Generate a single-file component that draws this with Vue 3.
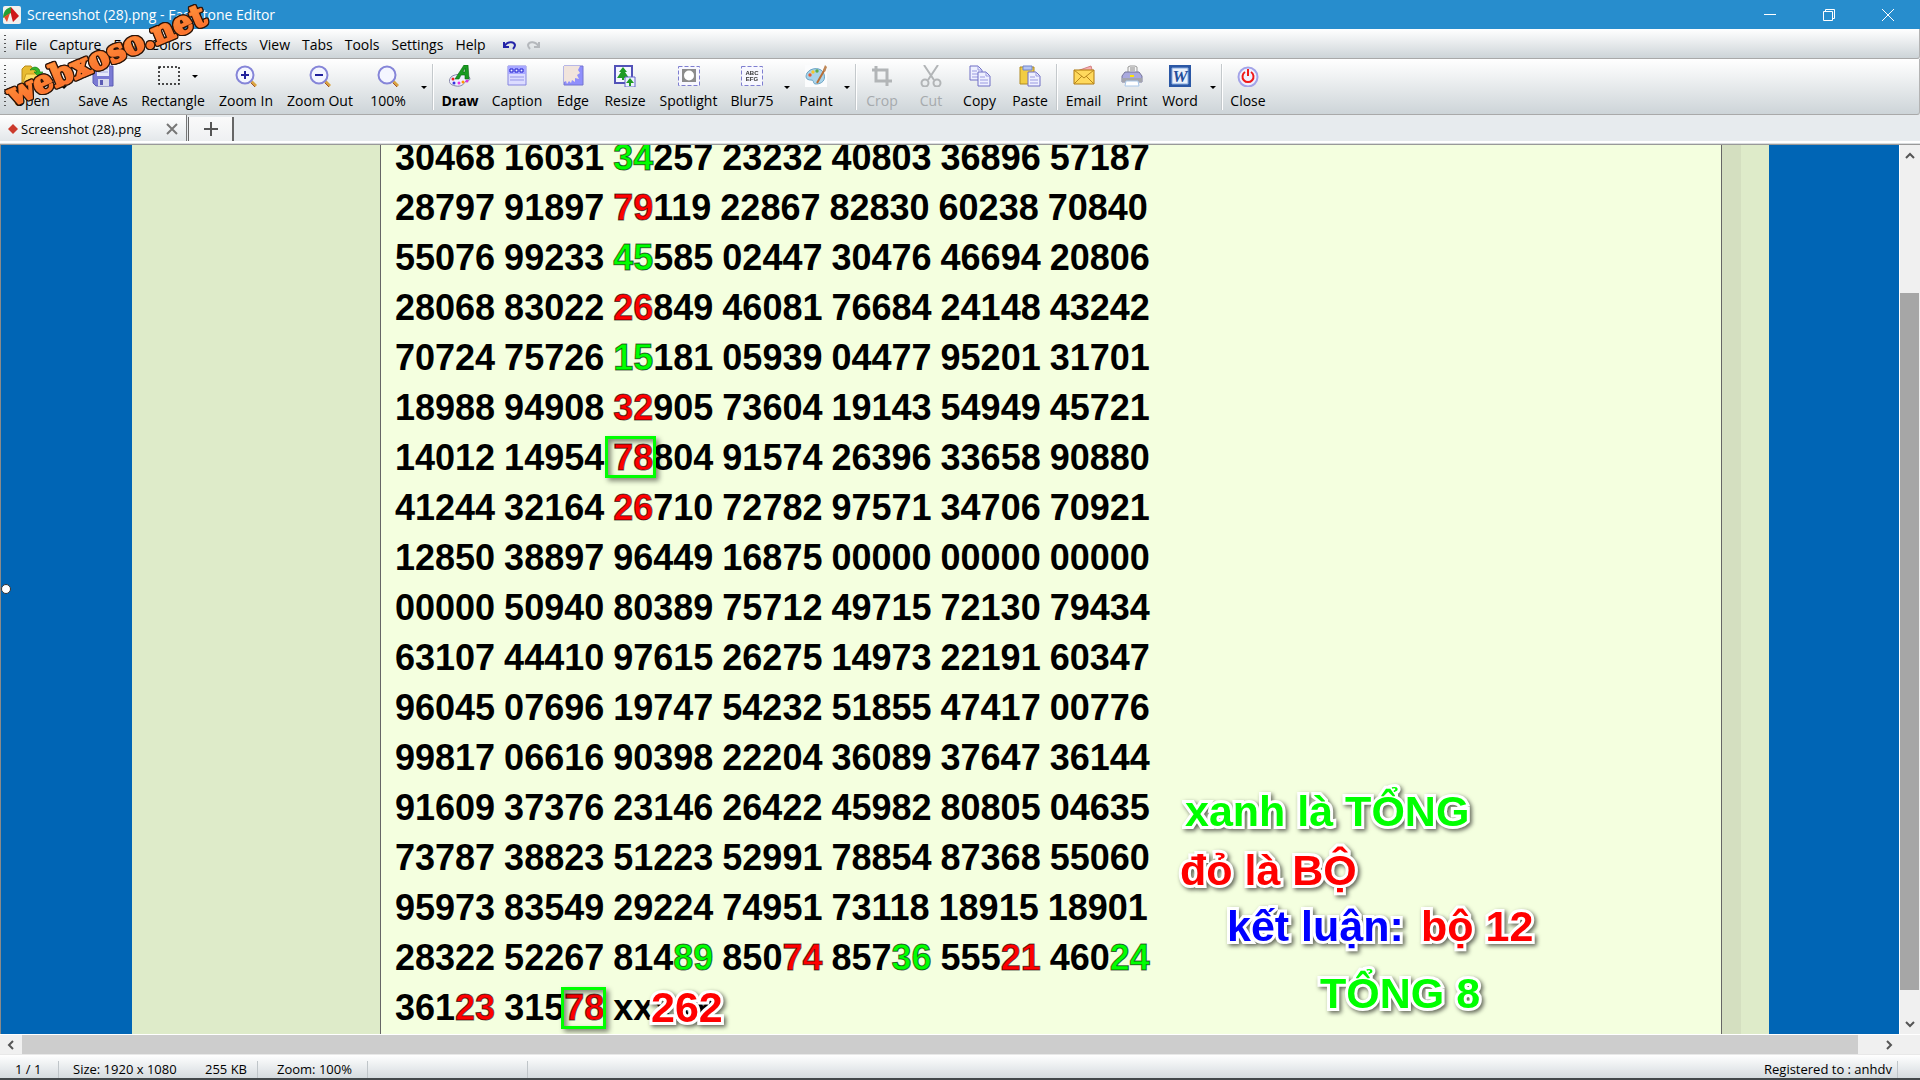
<script setup>
import { ref } from 'vue'

const menus = ['File', 'Capture', 'Edit', 'Colors', 'Effects', 'View', 'Tabs', 'Tools', 'Settings', 'Help']

/* ---------------- ICONS (22 x 22) ---------------- */
const lens = '<path d="M15 15l6 6" stroke="#d9a441" stroke-width="3"/><path d="M16 18l4 4" stroke="#a0522d" stroke-width="1"/><circle cx="10" cy="10" r="8.5" fill="#f4f6ff" stroke="#8585d8" stroke-width="2"/>'
const page = (x, y) => `<path d="M${x} ${y}h8l4 4v10h-12z" fill="#eef0ff" stroke="#6e6ec4"/><path d="M${x + 8} ${y}v4h4M${x + 2} ${y + 5}h5M${x + 2} ${y + 8}h8M${x + 2} ${y + 11}h8" fill="none" stroke="#9a9ae0"/>`

const icons = {
  open: '<path d="M1 20V4l3-3h6l2 3h6v5L15 21H2z" fill="#e8bb31" stroke="#b88a18"/><path d="M5 9h15l-4 12H1z" fill="#ffe066" stroke="#c99b20"/><path d="M9 5c4-5 9-3 10 2h3l-4 5-5-5h3c-1-2-3-3-7-2z" fill="#32b52a" stroke="#17831b" stroke-width=".7"/>',
  save: '<path d="M1 1h20v20H4l-3-3z" fill="#7a7ad4" stroke="#5c5cb4"/><path d="M5 1h12v10H5z" fill="#e6e9fa"/><path d="M6 4h10M6 7h10" stroke="#a6aee0"/><path d="M6 14h11v7H6z" fill="#d8daec"/><path d="M8 15h3v5H8z" fill="#5c5cb4"/>',
  rect: '<path d="M1 2h20v17H1z" fill="none" stroke="#111" stroke-width="1.5" stroke-dasharray="2 2"/>',
  zoomin: lens + '<path d="M6 10h8M10 6v8" stroke="#20209c" stroke-width="2"/>',
  zoomout: lens + '<path d="M6 10h8" stroke="#20209c" stroke-width="2"/>',
  zoom: lens,
  draw: '<path d="M2 12c4-4 19-4 19 2 0 2-4 1-5 3s-4 5-9 4c-7-1-8-5-5-9z" fill="#eef" stroke="#88a"/><path d="M6 14L15 0h4l1 14h-4v-4h-4l-2 4zM14 7h2V3z" fill="#179b20" stroke="#08680e" stroke-width=".6" fill-rule="evenodd"/><circle cx="4" cy="14" r="1.5" fill="#e22"/><circle cx="5" cy="18" r="1.5" fill="#33d"/><circle cx="10" cy="18" r="1.5" fill="#e3d"/><circle cx="14" cy="17" r="1.5" fill="#f90"/><circle cx="18" cy="16" r="1.5" fill="#d3d"/>',
  caption: '<path d="M2 1h18v19H2z" fill="#dcdcff" stroke="#8585df"/><path d="M2 1h18v8H2z" fill="#a8a8ff"/><path d="M4 4h3v3H4zM9 4h3v3H9zM14 4h3v3h-3z" fill="#eef" stroke="#1d1dd0"/><path d="M4 12h14M4 15h14" stroke="#9595e8"/>',
  edge: '<path d="M2 1h19v19H2z" fill="#8f8ffc" stroke="#7474d0"/><path d="M2 1h16l-2 4 2 3-3 2 2 4-4-1v4l-3-2-1 3-2-2-2 3-1-3-2 1z" fill="#f1e4dc"/>',
  resize: '<path d="M1 1h17v17H1z" fill="#f5f7ff" stroke="#5252b8" stroke-width="2"/><path d="M9 2l4 5h-2l4 6h-5v2H8v-2H3l4-6H5z" fill="#209b24"/><path d="M11 12h10v10H11z" fill="#eef2ff" stroke="#6464c8"/><path d="M16 13l4 5h-3v3h-2v-3h-3z" fill="#209b24"/>',
  spot: '<path d="M.5 1.5h21v19H.5z" fill="#f8f8ff" stroke="#7e7ed0" stroke-dasharray="4 2"/><path d="M4 4h14v13H4z" fill="#8c8c8c"/><circle cx="11" cy="10.500" r="5" fill="#fff"/>',
  blur: '<path d="M.5 1.5h21v19H.5z" fill="#f8f8ff" stroke="#7e7ed0" stroke-dasharray="4 2"/><g fill="#333" font-family="Liberation Sans" font-weight="bold" font-size="6" text-anchor="middle" style="filter:blur(.5px)"><text x="11" y="10">ABC</text><text x="11" y="16">EFG</text></g>',
  paint: '<path d="M0 0h22v22H0z" fill="#fbfcfd"/><path d="M2 8c4-6 15-6 17 1 2 6-2 10-8 10-4 0-1-4-5-4-5 0-6-3-4-7z" fill="#a9d4eb" stroke="#6ba4c4"/><circle cx="5" cy="10" r="1.700" fill="#e45a35"/><circle cx="8" cy="7" r="1.700" fill="#f7c82d"/><circle cx="12" cy="6" r="1.700" fill="#57aa4a"/><path d="M12 18L20 4" stroke="#b96e35" stroke-width="2"/><path d="M18 5l2-5 2 2-2 5z" fill="#bf8757"/>',
  crop: '<path d="M5 1v15h16M1 5h15v16" fill="none" stroke="#b2b5b7" stroke-width="3"/>',
  cut: '<path d="M4 0l10 15M18 0L8 15" stroke="#b2b5b7" stroke-width="2"/><circle cx="5" cy="18" r="3.500" fill="none" stroke="#b2b5b7" stroke-width="2"/><circle cx="17" cy="18" r="3.500" fill="none" stroke="#b2b5b7" stroke-width="2"/>',
  copy: page(1, 1) + page(9, 7),
  paste: '<path d="M1 2h14v17H1z" fill="#f2cd43" stroke="#b18b20"/><path d="M4 1h9v4H4z" fill="#b5c5f1" stroke="#7185cb"/>' + page(9, 7),
  email: '<path d="M4 6l14-5 2 7z" fill="#f6aeb0" stroke="#d48284"/><path d="M1 5h20v14H1z" fill="#ffd95c" stroke="#af780d"/><path d="M1 5l10 8L21 5M1 19l8-8M21 19l-8-8" fill="none" stroke="#b8861c"/>',
  print: '<path d="M7 8V2l2-1h5l2 1v6z" fill="#f4f4f4" stroke="#999"/><path d="M9 3h5M9 5h5" stroke="#888"/><path d="M4 7h14l3 4v6H1v-6z" fill="#a9a9de" stroke="#777799"/><path d="M1 13h20v4H1z" fill="#a3a5ad"/><path d="M9 11h4" stroke="#ffe500" stroke-width="2"/><path d="M5 16h12l1 5H4z" fill="#fff" stroke="#a9c7e8"/>',
  word: '<path d="M0 0h22v22H0z" fill="#2a57a5"/><path d="M3 3h16v16H3z" fill="#eaf1fb" stroke="#85a9dd"/><text x="11" y="17" fill="#244e9b" font-family="Liberation Serif" font-size="17" font-style="italic" font-weight="bold" text-anchor="middle">W</text>',
  close: '<circle cx="11" cy="12" r="9.500" fill="#f0f0ff" stroke="#a3a3e8" stroke-width="2"/><path d="M8 7a5.500 5.500 0 1 0 6 0M11 4v7" fill="none" stroke="#f01818" stroke-width="2"/>'
}

const tools = [
  { icon: 'open', label: 'Open', w: 48, drop: 16 },
  { icon: 'save', label: 'Save As', w: 62 },
  { icon: 'rect', label: 'Rectangle', w: 78, inner: true },
  { icon: 'zoomin', label: 'Zoom In', w: 68 },
  { icon: 'zoomout', label: 'Zoom Out', w: 80 },
  { icon: 'zoom', label: '100%', w: 56, drop: 16, sep: true },
  { icon: 'draw', label: 'Draw', w: 52, bold: true },
  { icon: 'caption', label: 'Caption', w: 62 },
  { icon: 'edge', label: 'Edge', w: 50 },
  { icon: 'resize', label: 'Resize', w: 54 },
  { icon: 'spot', label: 'Spotlight', w: 73 },
  { icon: 'blur', label: 'Blur75', w: 54, drop: 15 },
  { icon: 'paint', label: 'Paint', w: 44, drop: 17, sep: true },
  { icon: 'crop', label: 'Crop', w: 50, disabled: true },
  { icon: 'cut', label: 'Cut', w: 48, disabled: true },
  { icon: 'copy', label: 'Copy', w: 49 },
  { icon: 'paste', label: 'Paste', w: 52, sep: true },
  { icon: 'email', label: 'Email', w: 51 },
  { icon: 'print', label: 'Print', w: 46 },
  { icon: 'word', label: 'Word', w: 50, drop: 16, sep: true },
  { icon: 'close', label: 'Close', w: 50 }
]

/* ---------------- NUMBER GRID ---------------- */
// g(..) marks green digits, r(..) marks red digits
const source = ref([
  '30468 16031 g(34)257 23232 40803 36896 57187',
  '28797 91897 r(79)119 22867 82830 60238 70840',
  '55076 99233 g(45)585 02447 30476 46694 20806',
  '28068 83022 r(26)849 46081 76684 24148 43242',
  '70724 75726 g(15)181 05939 04477 95201 31701',
  '18988 94908 r(32)905 73604 19143 54949 45721',
  '14012 14954 r(78)804 91574 26396 33658 90880',
  '41244 32164 r(26)710 72782 97571 34706 70921',
  '12850 38897 96449 16875 00000 00000 00000',
  '00000 50940 80389 75712 49715 72130 79434',
  '63107 44410 97615 26275 14973 22191 60347',
  '96045 07696 19747 54232 51855 47417 00776',
  '99817 06616 90398 22204 36089 37647 36144',
  '91609 37376 23146 26422 45982 80805 04635',
  '73787 38823 51223 52991 78854 87368 55060',
  '95973 83549 29224 74951 73118 18915 18901',
  '28322 52267 814g(89) 850r(74) 857g(36) 555r(21) 460g(24)',
  '361r(23) 315r(78) xxxxx'
])

function parse(group) {
  return group.match(/[gr]\(\d+\)|[\dx]+/g).map(p => {
    const marked = p.endsWith(')')
    return { text: marked ? p.slice(2, -1) : p, color: marked ? p[0] : '' }
  })
}

const rows = source.value.map(line => line.split(' ').map(parse))
</script>

<template>
  <div class="window">
    <header class="title-bar">
      <svg class="app-icon" width="18" height="18" viewBox="0 0 18 18">
        <rect width="18" height="18" rx="2" fill="#f2f0ee" />
        <path d="M8 1C4 2 0 5 0 12l8-5z" fill="#23a033" />
        <path d="M8 1l8 9-6 6C9 12 7 7 8 1z" fill="#cf1717" />
        <path d="M1 11l6-4-3 9z" fill="#e44c2a" />
      </svg>
      <h1>Screenshot (28).png - FastStone Editor</h1>
      <div class="window-buttons">
        <button aria-label="Minimize"><svg width="12" height="12"><path d="M0 5.500h12" /></svg></button>
        <button aria-label="Restore"><svg width="12" height="12"><path d="M.5 2.500h9v9h-9zM2.500 2.500v-2h9v9h-2" /></svg></button>
        <button aria-label="Close window"><svg width="12" height="12"><path d="M0 0l12 12M12 0L0 12" /></svg></button>
      </div>
    </header>

    <nav class="menu-bar">
      <span class="grip"></span>
      <button v-for="m in menus" :key="m">{{ m }}</button>
      <button class="history" aria-label="Undo">
        <svg width="14" height="10"><path d="M1 2v5h5M1 7c3-6 10-6 11-2 0 2-1 3-2 4" stroke="#2424a8" /></svg>
      </button>
      <button class="history" aria-label="Redo">
        <svg width="14" height="10"><path d="M12 2v5H7M12 7C9 1 2 1 1 5c0 2 1 3 2 4" stroke="#b4b8bc" /></svg>
      </button>
    </nav>

    <div class="toolbar">
      <span class="grip"></span>
      <template v-for="t in tools" :key="t.label">
        <button class="tool" :class="{ bold: t.bold }" :disabled="t.disabled" :style="{ width: t.w + 'px' }">
          <span class="glyph" :class="{ inner: t.inner }">
            <svg width="22" height="22" viewBox="0 0 22 22" fill="none" v-html="icons[t.icon]"></svg>
            <i v-if="t.inner" class="arrow"></i>
          </span>
          <span>{{ t.label }}</span>
        </button>
        <button v-if="t.drop" class="drop" :aria-label="t.label + ' options'" :style="{ width: t.drop + 'px' }">
          <i class="arrow"></i>
        </button>
        <span v-if="t.sep" class="sep"></span>
      </template>
    </div>

    <div class="tab-bar">
      <div class="tab">
        <svg width="10" height="10"><path d="M5 0l5 5-5 5-5-5z" fill="#cb3a2c" /></svg>
        <span>Screenshot (28).png</span>
        <button aria-label="Close tab">
          <svg width="12" height="12"><path d="M1 1l10 10M11 1L1 11" stroke="#777" stroke-width="2" /></svg>
        </button>
      </div>
      <button class="new-tab" aria-label="New tab">
        <svg width="14" height="14"><path d="M7 0v14M0 7h14" stroke="#555" stroke-width="2" /></svg>
      </button>
    </div>

    <div class="workspace">
      <main class="canvas">
        <div class="blue"></div>
        <div class="margin"></div>
        <section class="sheet">
          <div v-for="(row, i) in rows" :key="i" class="row">
            <span v-for="(group, j) in row" :key="j"><span v-for="(p, k) in group" :key="k" :class="p.color">{{ p.text }}</span></span>
          </div>
          <div class="frame first"></div>
          <div class="frame second"></div>
          <p class="note green n1">xanh là TỔNG</p>
          <p class="note red n2">đỏ là BỘ</p>
          <p class="note blue-text n3">kết luận:</p>
          <p class="note red n4">bộ 12</p>
          <p class="note green n5">TỔNG 8</p>
          <p class="note red n6">262</p>
        </section>
        <div class="shade"></div>
        <div class="margin"></div>
        <div class="blue"></div>
        <span class="handle"></span>
      </main>

      <div class="v-scroll">
        <svg width="10" height="8"><path d="M1 6l4-4 4 4" /></svg>
        <div class="v-track"><div class="v-thumb"></div></div>
        <svg width="10" height="8"><path d="M1 2l4 4 4-4" /></svg>
      </div>
    </div>

    <div class="h-scroll">
      <svg width="8" height="10"><path d="M6 1L2 5l4 4" /></svg>
      <div class="h-track"></div>
      <svg width="8" height="10"><path d="M2 1l4 4-4 4" /></svg>
    </div>

    <footer class="status">
      <span class="pages">1 / 1</span>
      <span class="info"><span>Size: 1920 x 1080</span><span>255 KB</span></span>
      <span class="zoom">Zoom: 100%</span>
      <span class="empty"></span>
      <span class="owner">Registered to : anhdv</span>
    </footer>

    <svg class="watermark" width="240" height="120" viewBox="0 0 240 120">
      <defs>
        <linearGradient id="orange" x1="0" y1="0" x2="0" y2="1">
          <stop offset="0" stop-color="#ff9a3d" />
          <stop offset="1" stop-color="#f9682b" />
        </linearGradient>
      </defs>
      <text x="13" y="106" transform="rotate(-23 13 106)">webxoso.net</text>
    </svg>
  </div>
</template>

<style>
body {
  margin: 0;
  overflow: hidden;
}
</style>

<style scoped>
.window {
  position: relative;
  height: 100vh;
  display: flex;
  flex-direction: column;
  box-sizing: border-box;
  border-bottom: 2px solid #43484b;
  overflow: hidden;
  background: #e7ebee;
  color: #000;
  font-family: "Open Sans", "Noto Sans", sans-serif;
  font-size: 14px;
}

button {
  padding: 0;
  border: 0;
  background: none;
  color: inherit;
  font: inherit;
}

svg {
  display: block;
  flex: none;
}

/* TITLE */
.title-bar {
  height: 29px;
  flex: none;
  display: flex;
  align-items: center;
  padding-left: 3px;
  background: #278dcd;
  color: #fff;
}

h1 {
  flex: 1;
  margin: 0 0 0 6px;
  font-size: 14px;
  font-weight: 400;
}

.window-buttons {
  display: flex;
  padding-right: 3px;
}

.window-buttons button {
  width: 59px;
  height: 29px;
  display: flex;
  align-items: center;
  justify-content: center;
}

.window-buttons svg {
  fill: none;
  stroke: #fff;
}

/* MENU */
.menu-bar,
.toolbar {
  display: flex;
  flex: none;
  box-sizing: border-box;
  border-right: 1px solid #b4b4b4;
  border-bottom: 1px solid #a9a9a9;
  border-radius: 0 0 3px 0;
  background: linear-gradient(#fff, #f1f3f4 30%, #cdd4d8);
}

.menu-bar {
  height: 30px;
  gap: 12px;
  padding-top: 2px;
}

.menu-bar .grip {
  margin-top: 4px;
  margin-right: -3px;
}

.grip {
  width: 2px;
  margin: 6px 0 5px 4px;
  background: repeating-linear-gradient(#555 0 1px, transparent 1px 4px);
}

.menu-bar svg {
  fill: none;
  stroke-width: 2;
}

.history {
  margin-left: 5px;
}

.history + .history {
  margin-left: -2px;
}

/* TOOLBAR */
.toolbar {
  height: 56px;
}

.toolbar .grip {
  margin-right: 2px;
}

.tool {
  display: flex;
  flex: none;
  flex-direction: column;
  align-items: center;
  padding-top: 6px;
  white-space: nowrap;
}

.tool > span:last-child {
  line-height: 20px;
  margin-top: 4px;
}

.tool:disabled {
  color: #a6aaad;
}

.bold {
  font-weight: 700;
}

.glyph {
  display: flex;
  align-items: center;
}

.glyph.inner {
  gap: 12px;
  padding-left: 10px;
}

.arrow {
  width: 0;
  height: 0;
  border: 3px solid transparent;
  border-top-color: #000;
  border-bottom: 0;
}

.drop {
  display: flex;
  flex: none;
  justify-content: center;
  padding-top: 27px;
}

.drop .arrow {
  flex: none;
}

.sep {
  width: 1px;
  flex: none;
  margin: 5px 0 4px;
  border-left: 1px solid #c4c9cc;
  background: #fff;
}

/* TABS */
.tab-bar {
  height: 30px;
  flex: none;
  display: flex;
  box-sizing: border-box;
  padding-bottom: 3px;
  border-bottom: 1px solid #999;
  background: linear-gradient(#e7ebee 26px, #fff 26px 28px, #d9dcde 28px);
}

.tab {
  width: 187px;
  display: flex;
  align-items: center;
  box-sizing: border-box;
  padding: 2px 8px 0 8px;
  border-right: 1px solid #777;
  background: linear-gradient(#fff, #e3e7ea);
  font-size: 13px;
}

.tab span {
  flex: 1;
  margin-left: 3px;
  white-space: nowrap;
}

.new-tab {
  width: 46px;
  margin: 2px 0 0 1px;
  display: flex;
  align-items: center;
  justify-content: center;
  border: 1px solid #666;
  border-width: 0 2px 0 1px;
  background: linear-gradient(#fafafa, #eef0f2);
}

/* CANVAS */
.workspace {
  flex: 1;
  min-height: 0;
  display: flex;
}

.canvas {
  position: relative;
  flex: 1;
  min-width: 0;
  display: grid;
  grid-template-columns: 131px 248px 1fr 19px 28px 130px;
  overflow: hidden;
  border-left: 1px solid #8a8a8a;
  border-right: 1px solid #fff;
}

.blue {
  background: #0065b5;
}

.margin {
  background: #deebc9;
}

.shade {
  background: #d4dfc0;
}

.sheet {
  position: relative;
  min-width: 0;
  min-height: 0;
  overflow: hidden;
  border: 1px solid #666;
  border-width: 0 1px;
  background: #f4ffdf;
  font-family: "Liberation Sans", Arial, sans-serif;
  font-weight: 700;
}

.row {
  display: flex;
  gap: 9px;
  height: 50px;
  padding-left: 14px;
  font-size: 36px;
  line-height: 50px;
}

.row:first-child {
  margin-top: -12px;
}

.row .g,
.row .r {
  -webkit-text-stroke: 1px #0009;
}

.row .g {
  color: #0f0;
}

.row .r {
  color: #f00;
}

.frame {
  position: absolute;
  width: 45px;
  height: 36px;
  border: 3px solid #0f0;
  box-shadow: 3px 3px 5px #0007, inset 3px 3px 5px #0007;
}

.first {
  left: 224px;
  top: 291px;
}

.second {
  width: 39px;
  left: 180px;
  top: 842px;
}

/* NOTES */
.note {
  position: absolute;
  margin: 0;
  font-size: 43px;
  line-height: 50px;
  white-space: nowrap;
  -webkit-text-stroke: 6px #fff;
  paint-order: stroke fill;
  stroke-linejoin: round;
  filter: drop-shadow(2px 2px 2px #0009);
}

.green { color: #0f0; }
.red { color: #f00; }
.blue-text { color: #00f; }

.n1 { left: 804px; top: 641px; }
.n2 { left: 799px; top: 700px; }
.n3 { left: 846px; top: 756px; }
.n4 { left: 1040px; top: 756px; }
.n5 { left: 939px; top: 823px; }
.n6 { left: 270px; top: 837px; }

.handle {
  position: absolute;
  left: 0;
  top: 439px;
  width: 10px;
  height: 10px;
  border: 1px solid #333;
  border-radius: 50%;
  box-sizing: border-box;
  background: #fff;
}

/* SCROLLBARS */
.v-scroll,
.h-scroll {
  display: flex;
  align-items: center;
  background: #f0f0f0;
}

.v-scroll svg,
.h-scroll svg {
  fill: none;
  stroke: #555;
  stroke-width: 2;
}

.v-scroll {
  width: 20px;
  flex-direction: column;
  padding: 7px 0 6px;
  box-sizing: border-box;
}

.v-track {
  flex: 1;
  width: 19px;
  margin: 5px 1px 5px 0;
  display: grid;
  grid-template-rows: 128fr 697fr 25fr;
}

.v-thumb {
  grid-row: 2;
  background: #a6a6a6;
}

.h-scroll {
  height: 21px;
  flex: none;
  box-sizing: border-box;
  padding: 0 27px 0 7px;
  border-top: 1px solid #fff;
  border-bottom: 1px solid #e8e8e8;
}

.h-track {
  flex: 1;
  height: 19px;
  margin: 0 27px 0 7px;
  background: #cdcdcd;
}

/* STATUS */
.status {
  height: 23px;
  flex: none;
  display: flex;
  align-items: stretch;
  padding-right: 22px;
  background: linear-gradient(#fff, #d5dbdf);
  font-size: 13px;
  line-height: 28px;
}

.status > span {
  box-sizing: border-box;
  height: 23px;
  border: 0 solid;
  border-right-width: 1px;
  border-image: linear-gradient(transparent 30%, #bfc5c9 30%) 1;
  white-space: nowrap;
}

.pages { width: 59px; padding-left: 15px; }
.info { width: 199px; padding: 0 10px 0 14px; display: flex; justify-content: space-between; }
.zoom { width: 110px; padding-left: 19px; }
.empty { width: 160px; }
.owner { margin-left: auto; padding-right: 5px; }

/* WATERMARK */
.watermark {
  position: absolute;
  left: 0;
  top: 0;
  overflow: visible;
  pointer-events: none;
  filter: drop-shadow(1px 0 0 #2b1509) drop-shadow(-1px 0 0 #2b1509) drop-shadow(0 1px 0 #2b1509) drop-shadow(0 -1px 0 #2b1509);
}

.watermark text {
  fill: url(#orange);
  stroke: #ff7c30;
  stroke-width: 2px;
  stroke-linejoin: round;
  paint-order: stroke fill;
  font-family: "DejaVu Serif", serif;
  font-size: 31px;
  font-weight: 700;
}
</style>
